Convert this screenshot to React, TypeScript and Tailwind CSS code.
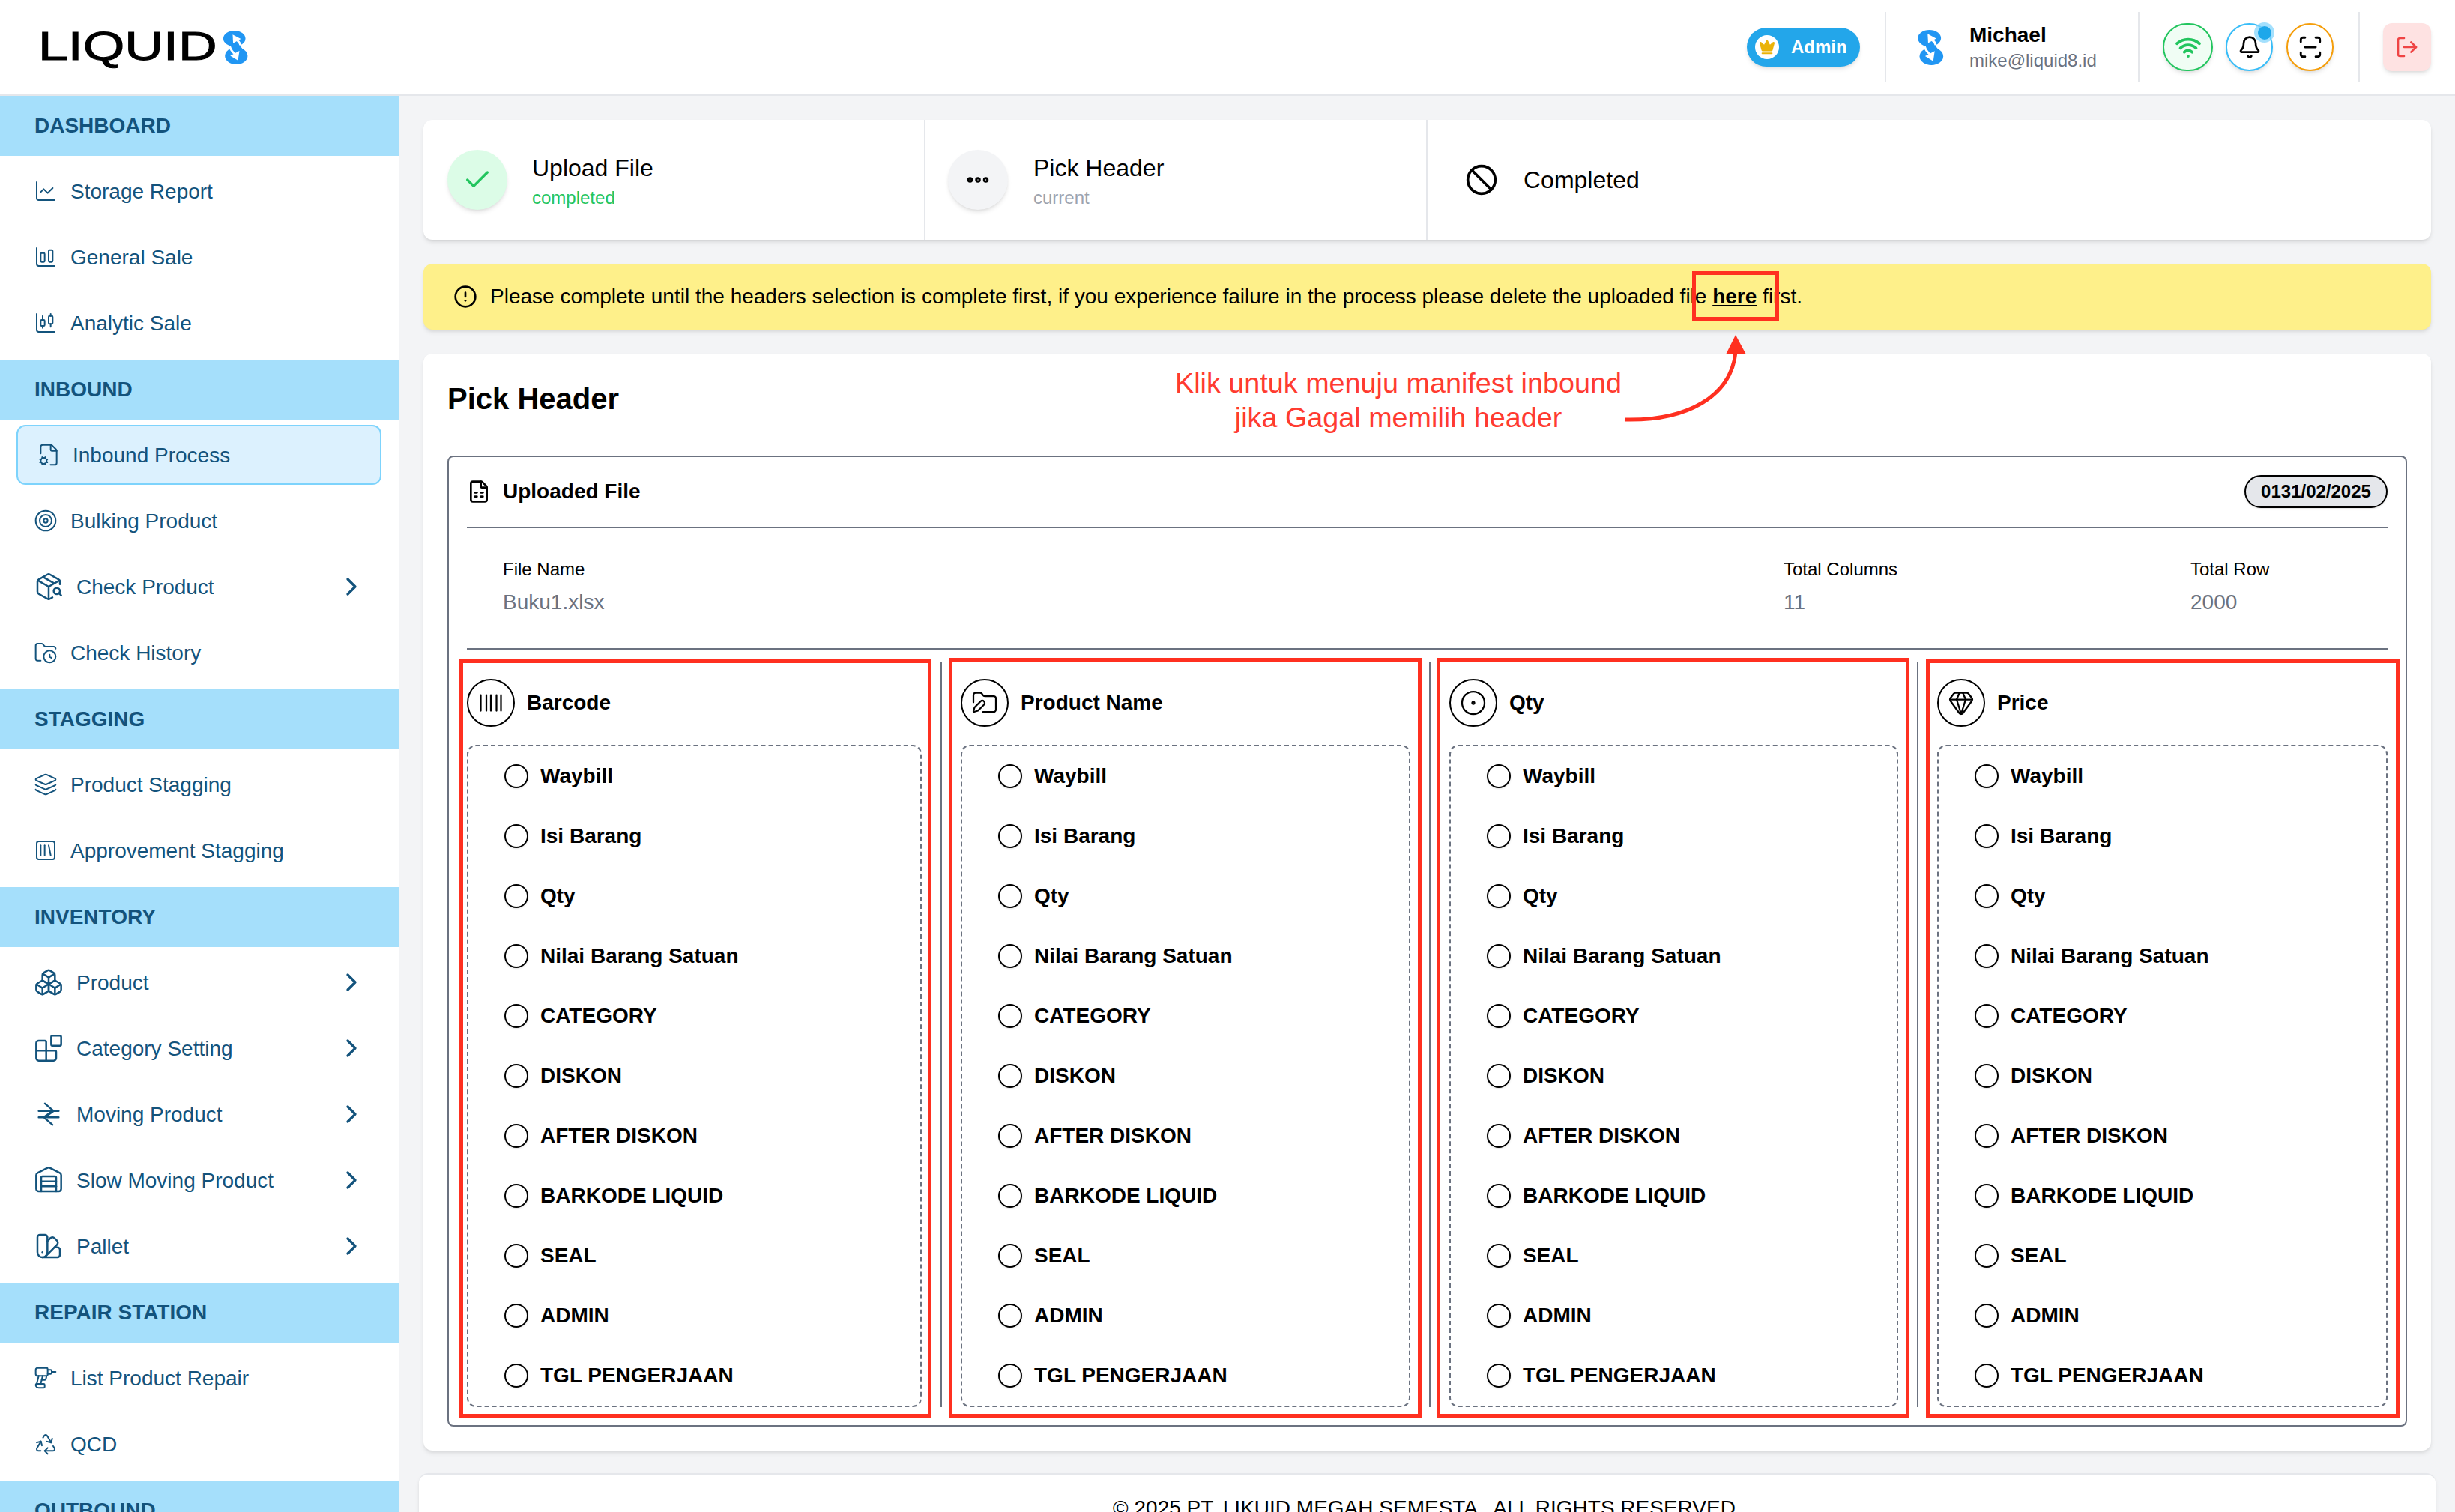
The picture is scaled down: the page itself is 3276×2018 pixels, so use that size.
import {
  Ban,
  Barcode,
  Bell,
  Blocks,
  Boxes,
  ChartCandlestick,
  ChartColumnBig,
  ChartLine,
  Check,
  ChevronRight,
  CircleAlert,
  CircleDot,
  Crown,
  Drill,
  Ellipsis,
  FileCog,
  FileSpreadsheet,
  FolderClock,
  FolderPen,
  Gem,
  Layers,
  LogOut,
  PackageSearch,
  Recycle,
  ScanLine,
  SquareLibrary,
  SwatchBook,
  Target,
  Warehouse,
  Wifi,
} from 'lucide-react';
import type { ComponentType, SVGProps } from 'react';

type IconType = ComponentType<SVGProps<SVGSVGElement> & { size?: number; strokeWidth?: number }>;

function MovingIcon(props: SVGProps<SVGSVGElement> & { size?: number; strokeWidth?: number }) {
  const { size, strokeWidth, ...rest } = props;
  return (
    <svg width={size} height={size} viewBox="0 0 24 24" fill="none" stroke="currentColor" strokeWidth={strokeWidth} strokeLinecap="round" strokeLinejoin="round" {...rest}>
      <path d="M4 9.5h16M4 14.5h16M9 3.5l7 6-7 5M15 20.5l-7-6 7-5" />
    </svg>
  );
}

function LogoMark({ className }: { className: string }) {
  return (
    <svg className={className} viewBox="0 0 102 140">
      <ellipse cx="47" cy="33" rx="46" ry="33" fill="#2196f3" />
      <ellipse cx="55" cy="105" rx="47" ry="35" fill="#2196f3" />
      <path d="M20 55 L60 50 L88 85 L45 90 Z" fill="#2196f3" />
      <path d="M72 60 C70 48 62 42 52 36" fill="none" stroke="#fff" strokeWidth="9" />
      <polygon points="40,16 74,34 42,52" fill="#fff" />
      <path d="M28 66 C32 80 40 90 50 98" fill="none" stroke="#fff" strokeWidth="9" />
      <polygon points="62,124 30,104 68,84" fill="#fff" />
    </svg>
  );
}

type MenuItem = { label: string; icon: IconType; sub?: boolean; active?: boolean };
type MenuSection = { title: string; items: MenuItem[] };

const menu: MenuSection[] = [
  {
    title: 'DASHBOARD',
    items: [
      { label: 'Storage Report', icon: ChartLine },
      { label: 'General Sale', icon: ChartColumnBig },
      { label: 'Analytic Sale', icon: ChartCandlestick },
    ],
  },
  {
    title: 'INBOUND',
    items: [
      { label: 'Inbound Process', icon: FileCog, active: true },
      { label: 'Bulking Product', icon: Target },
      { label: 'Check Product', icon: PackageSearch, sub: true },
      { label: 'Check History', icon: FolderClock },
    ],
  },
  {
    title: 'STAGGING',
    items: [
      { label: 'Product Stagging', icon: Layers },
      { label: 'Approvement Stagging', icon: SquareLibrary },
    ],
  },
  {
    title: 'INVENTORY',
    items: [
      { label: 'Product', icon: Boxes, sub: true },
      { label: 'Category Setting', icon: Blocks, sub: true },
      { label: 'Moving Product', icon: MovingIcon, sub: true },
      { label: 'Slow Moving Product', icon: Warehouse, sub: true },
      { label: 'Pallet', icon: SwatchBook, sub: true },
    ],
  },
  {
    title: 'REPAIR STATION',
    items: [
      { label: 'List Product Repair', icon: Drill },
      { label: 'QCD', icon: Recycle },
    ],
  },
  { title: 'OUTBOUND', items: [] },
];

const options = ['Waybill', 'Isi Barang', 'Qty', 'Nilai Barang Satuan', 'CATEGORY', 'DISKON', 'AFTER DISKON', 'BARKODE LIQUID', 'SEAL', 'ADMIN', 'TGL PENGERJAAN'];

const columns: { title: string; icon: IconType; width: string }[] = [
  { title: 'Barcode', icon: Barcode, width: 'w-[607px]' },
  { title: 'Product Name', icon: FolderPen, width: 'w-[600px]' },
  { title: 'Qty', icon: CircleDot, width: 'w-[599px]' },
  { title: 'Price', icon: Gem, width: 'w-[601px]' },
];

function Sidebar() {
  return (
    <aside className="w-[533px] shrink-0 bg-white text-[#13537c]">
      {menu.map((section) => (
        <div key={section.title}>
          <div className="h-[80px] bg-[#a5dffb] pl-[46px] flex items-center text-[28px] font-bold">{section.title}</div>
          <div className="pt-[3px] pb-[5px]">
            {section.items.map((item) => {
              const Icon = item.icon;
              if (item.active) {
                return (
                  <div key={item.label} className="h-[88px] px-[22px] flex items-center">
                    <div className="w-[487px] h-[80px] rounded-[12px] border-2 border-[#7dd3fc] bg-[#dcf1fe] pl-[25px] flex items-center gap-[16px]">
                      <Icon size={32} strokeWidth={1.5} />
                      <span className="pt-[2px] text-[28px]">{item.label}</span>
                    </div>
                  </div>
                );
              }
              return (
                <div key={item.label} className="h-[88px] pl-[45px] pr-[44px] flex items-center gap-[17px]">
                  <Icon size={item.sub ? 40 : 32} strokeWidth={1.5} />
                  <span className="pt-[2px] text-[28px] flex-1">{item.label}</span>
                  {item.sub && <ChevronRight size={40} strokeWidth={2} />}
                </div>
              );
            })}
          </div>
        </div>
      ))}
    </aside>
  );
}

function TopBar() {
  return (
    <header className="h-[128px] shrink-0 bg-white border-b-2 border-[#e5e7eb] flex items-center pl-[51px] pr-[32px]">
      <div className="flex items-center">
        <div className="w-[246px] pb-[4px] text-[53px] leading-none text-black [-webkit-text-stroke:1px_black]">
          <span className="inline-block origin-left scale-x-[1.35]">LIQUID</span>
        </div>
        <LogoMark className="w-[34px] h-[45px]" />
      </div>
      <div className="ml-auto flex items-center">
        <div className="w-[151px] h-[52px] rounded-full bg-[#23a6ea] shadow-md flex items-center pl-[11px] gap-[16px]">
          <div className="w-[32px] h-[32px] rounded-full bg-white flex items-center justify-center">
            <Crown size={22} className="text-[#eab308]" fill="#eab308" />
          </div>
          <span className="text-[24px] font-bold text-white">Admin</span>
        </div>
        <div className="ml-[33px] w-[2px] h-[94px] bg-[#e5e7eb]" />
        <LogoMark className="ml-[41px] w-[36px] h-[47px]" />
        <div className="ml-[34px] w-[225px] pb-[2px]">
          <div className="text-[28px] leading-[40px] font-bold text-black">Michael</div>
          <div className="-mt-[2px] text-[24px] leading-[32px] text-[#6b7280]">mike@liquid8.id</div>
        </div>
        <div className="w-[2px] h-[94px] bg-[#e5e7eb]" />
        <div className="ml-[31px] w-[67px] h-[64px] rounded-full border-2 border-[#22c55e] bg-[#f0fdf4] shadow-md flex items-center justify-center">
          <Wifi size={36} strokeWidth={2.5} className="text-[#22c55e]" />
        </div>
        <div className="relative ml-[17px] w-[63px] h-[64px] rounded-full border-2 border-[#38bdf8] bg-white shadow-md flex items-center justify-center">
          <Bell size={32} className="text-black" />
          <div className="absolute top-[-3px] right-[-4px] w-[27px] h-[27px] rounded-full bg-[#7dd3fc]/70 flex items-center justify-center">
            <div className="w-[18px] h-[18px] rounded-full bg-[#1ea7ea]" />
          </div>
        </div>
        <div className="ml-[18px] w-[63px] h-[64px] rounded-full border-2 border-[#f59e0b] bg-white shadow-md flex items-center justify-center">
          <ScanLine size={34} className="text-black" />
        </div>
        <div className="ml-[33px] w-[2px] h-[94px] bg-[#e5e7eb]" />
        <div className="ml-[31px] w-[64px] h-[64px] rounded-[12px] bg-[#fee2e2] shadow-md flex items-center justify-center">
          <LogOut size={32} className="text-[#ef4444]" />
        </div>
      </div>
    </header>
  );
}

function Stepper() {
  return (
    <div className="h-[160px] rounded-[12px] bg-white shadow-md flex">
      <div className="w-[670px] pl-[32px] border-r-2 border-[#e5e7eb] flex items-center gap-[33px]">
        <div className="w-[80px] h-[80px] rounded-full bg-[#dcfce7] shadow-md flex items-center justify-center">
          <Check size={40} className="text-[#22c55e]" />
        </div>
        <div>
          <div className="text-[32px] leading-[48px] text-black">Upload File</div>
          <div className="text-[24px] leading-[32px] text-[#22c55e]">completed</div>
        </div>
      </div>
      <div className="w-[670px] pl-[30px] border-r-2 border-[#e5e7eb] flex items-center gap-[34px]">
        <div className="w-[80px] h-[80px] rounded-full bg-[#f3f4f6] shadow-md flex items-center justify-center">
          <Ellipsis size={36} strokeWidth={3} className="text-black" />
        </div>
        <div>
          <div className="text-[32px] leading-[48px] text-black">Pick Header</div>
          <div className="text-[24px] leading-[32px] text-[#9ca3af]">current</div>
        </div>
      </div>
      <div className="flex-1 pl-[50px] flex items-center gap-[34px]">
        <Ban size={44} className="text-black" />
        <div className="text-[32px] text-black">Completed</div>
      </div>
    </div>
  );
}

function MappingColumn({ title, icon: Icon, width }: { title: string; icon: IconType; width: string }) {
  return (
    <div className={`${width} shrink-0`}>
      <div className="h-[64px] mb-[24px] flex items-center gap-[16px]">
        <div className="w-[64px] h-[64px] rounded-full border-2 border-black flex items-center justify-center">
          <Icon size={36} strokeWidth={1.5} className="text-black" />
        </div>
        <span className="text-[28px] font-bold text-black">{title}</span>
      </div>
      <div className="rounded-[12px] border-2 border-dashed border-[#6b7280]">
        {options.map((opt) => (
          <div key={opt} className="h-[80px] pl-[48px] flex items-center gap-[16px]">
            <div className="w-[32px] h-[32px] rounded-full border-2 border-black bg-white shadow-sm" />
            <span className="text-[28px] font-semibold text-black">{opt}</span>
          </div>
        ))}
      </div>
    </div>
  );
}

function UploadedBox() {
  return (
    <div className="rounded-[8px] border-2 border-[#6b7280] px-[24px] pb-[24px]">
      <div className="h-[95px] pb-[2px] flex items-center gap-[16px] border-b-2 border-[#6b7280]">
        <FileSpreadsheet size={32} className="text-black" />
        <span className="text-[28px] font-bold text-black">Uploaded File</span>
        <span className="ml-auto w-[191px] h-[44px] rounded-full border-2 border-black bg-[#e5e7eb] shadow-sm flex items-center justify-center text-[24px] font-bold text-black">0131/02/2025</span>
      </div>
      <div className="h-[162px] pl-[48px] pb-[2px] flex items-center border-b-2 border-[#6b7280]">
        <div className="flex-1">
          <div className="text-[24px] leading-[32px] text-black">File Name</div>
          <div className="mt-[8px] text-[28px] leading-[40px] text-[#6b7280]">Buku1.xlsx</div>
        </div>
        <div className="w-[543px]">
          <div className="text-[24px] leading-[32px] text-black">Total Columns</div>
          <div className="mt-[8px] text-[28px] leading-[40px] text-[#6b7280]">11</div>
        </div>
        <div className="w-[263px]">
          <div className="text-[24px] leading-[32px] text-black">Total Row</div>
          <div className="mt-[8px] text-[28px] leading-[40px] text-[#6b7280]">2000</div>
        </div>
      </div>
      <div className="pt-[39px] flex justify-between">
        {columns.map((col, i) => (
          <div key={col.title} className="contents">
            {i > 0 && <div className="w-[2px] mt-[-23px] bg-[#6b7280]" />}
            <MappingColumn {...col} />
          </div>
        ))}
      </div>
    </div>
  );
}

function Annotations() {
  const redBoxes = [
    'left-[2258px] top-[362px] w-[116px] h-[66px]',
    'left-[613px] top-[880px] w-[630px] h-[1012px]',
    'left-[1266px] top-[878px] w-[631px] h-[1014px]',
    'left-[1917px] top-[878px] w-[631px] h-[1014px]',
    'left-[2570px] top-[880px] w-[632px] h-[1012px]',
  ];
  return (
    <>
      {redBoxes.map((pos) => (
        <div key={pos} className={`absolute ${pos} border-[5px] border-[#ff3020]`} />
      ))}
      <div className="absolute left-[1469px] top-[488px] w-[794px] text-center text-[37.75px] leading-[46px] text-[#ff3b30]">
        Klik untuk menuju manifest inbound
        <br />
        jika Gagal memilih header
      </div>
      <svg className="absolute left-[2160px] top-[440px] w-[180px] h-[130px]" viewBox="0 0 180 130">
        <path d="M8 120 C90 122 150 90 156 30" fill="none" stroke="#ff3020" strokeWidth="5" />
        <polygon points="156,7 143,33 170,33" fill="#ff3020" />
      </svg>
    </>
  );
}

export default function App() {
  return (
    <div className="relative h-screen overflow-hidden flex flex-col bg-[#f3f4f6] font-['Liberation_Sans',Arial,sans-serif]">
      <TopBar />
      <div className="flex-1 min-h-0 flex">
        <Sidebar />
        <main className="flex-1 min-w-0">
          <div className="pt-[32px] pl-[32px] pr-[32px]">
            <Stepper />
            <div className="mt-[32px] h-[88px] rounded-[12px] bg-[#fef08a] shadow-md pl-[40px] flex items-center gap-[17px] text-[28px] text-black">
              <CircleAlert size={32} />
              <span>
                Please complete until the headers selection is complete first, if you experience failure in the process please delete the uploaded file{' '}
                <span className="font-bold underline">here</span> first.
              </span>
            </div>
            <div className="mt-[32px] rounded-[12px] bg-white shadow-md p-[32px]">
              <h1 className="text-[40px] leading-[56px] font-bold text-black mb-[48px]">Pick Header</h1>
              <UploadedBox />
            </div>
          </div>
          <div className="mt-[30px] ml-[26px] mr-[26px] h-[100px] rounded-t-[12px] border-t-2 border-[#e5e7eb] bg-white pt-[24px] pr-[8px] text-center text-[28px] text-black shadow-md">
            © 2025 PT. LIKUID MEGAH SEMESTA . ALL RIGHTS RESERVED
          </div>
        </main>
      </div>
      <Annotations />
    </div>
  );
}
